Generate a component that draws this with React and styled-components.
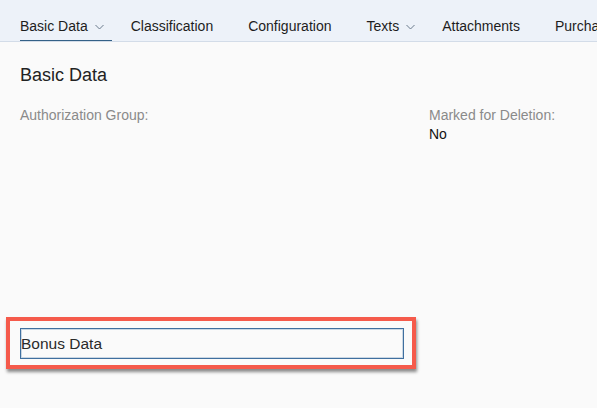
import React from "react";
import styled, { createGlobalStyle } from "styled-components";

const GlobalStyle = createGlobalStyle`
  html, body {
    margin: 0;
    padding: 0;
    background: #fafafa;
    font-family: "Liberation Sans", Arial, sans-serif;
    overflow: hidden;
  }
`;

const tabs = [
  { label: "Basic Data", menu: true, active: true },
  { label: "Classification" },
  { label: "Configuration" },
  { label: "Texts", menu: true },
  { label: "Attachments" },
  { label: "Purchasing" },
];

const Chevron = () => (
  <svg width="9" height="6" viewBox="0 0 9 6" fill="none">
    <path d="M0.5 1l4 4 4-4" stroke="#6b7a8c" strokeWidth="1" />
  </svg>
);

const App = () => {
  return (
    <Page>
      <GlobalStyle />
      <TabBar>
        {tabs.map((t) => (
          <Tab key={t.label} active={t.active} menu={t.menu}>
            {t.label}
            {t.menu && <Chevron />}
          </Tab>
        ))}
      </TabBar>
      <Content>
        <Title>Basic Data</Title>
        <Fields>
          <Field>
            <Label>Authorization Group:</Label>
          </Field>
          <Field>
            <Label>Marked for Deletion:</Label>
            <Value>No</Value>
          </Field>
        </Fields>
        <Highlight>
          <Input>Bonus Data</Input>
        </Highlight>
      </Content>
    </Page>
  );
};

export default App;

const Page = styled.div`
  width: 597px;
  height: 408px;
  background: #fafafa;
`;

const TabBar = styled.div`
  display: flex;
  align-items: stretch;
  gap: 27px;
  height: 41px;
  padding-left: 20px;
  background: #edf2f9;
  border-bottom: 1px solid #d3dce8;
  white-space: nowrap;
  overflow: hidden;
`;

const Tab = styled.div`
  display: flex;
  align-items: center;
  gap: 7px;
  padding: 12px 8px 0 0;
  margin-right: ${(p) => (p.menu ? "-8px" : "0")};
  font-size: 14px;
  color: #1d1d1d;
  box-sizing: border-box;
  border-bottom: 2px solid ${(p) => (p.active ? "#346187" : "transparent")};
  margin-bottom: -1px;
  svg {
    margin-top: 2px;
  }
`;

const Content = styled.div`
  padding: 22px 0 0 20px;
`;

const Title = styled.h2`
  margin: 0;
  font-size: 18px;
  font-weight: normal;
  color: #222;
  line-height: 22px;
`;

const Fields = styled.div`
  display: grid;
  grid-template-columns: 409px 1fr;
  margin-top: 21px;
  height: 210px;
`;

const Field = styled.div`
  display: flex;
  flex-direction: column;
  gap: 3px;
`;

const Label = styled.span`
  font-size: 14px;
  color: #8a8a8a;
  line-height: 16px;
`;

const Value = styled.span`
  font-size: 14px;
  color: #111;
  line-height: 16px;
`;

const Highlight = styled.div`
  width: 384px;
  margin-left: -14px;
  padding: 7px 8px 6px 10px;
  border: 4px solid #f55a4b;
  box-shadow: 1px 3px 3px rgba(0, 0, 0, 0.45);
`;

const Input = styled.div`
  box-sizing: border-box;
  height: 31px;
  width: 384px;
  border: 1px solid #3f6f9f;
  box-shadow: inset 0 0 0 1px rgba(63, 111, 159, 0.25);
  display: flex;
  align-items: center;
  font-size: 15.5px;
  color: #2a2a2a;
  background: #fafafa;
`;
